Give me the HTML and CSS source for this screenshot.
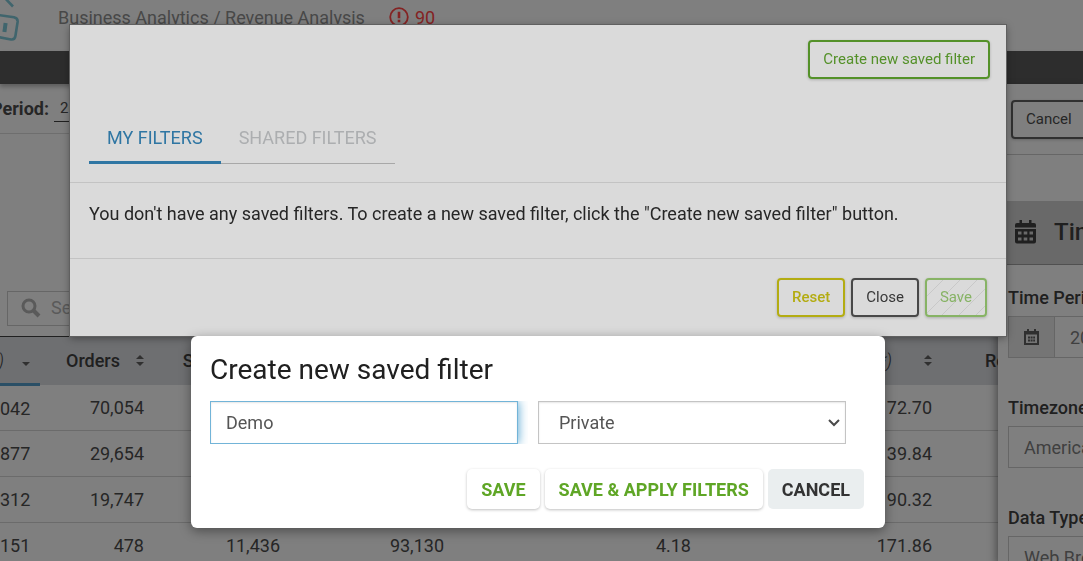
FILE: index.html
```html
<!DOCTYPE html>
<html lang="en">
<head>
  <meta charset="UTF-8">
  <meta name="viewport" content="width=device-width, initial-scale=1.0">
  <title>Revenue Analysis</title>
  <link rel="stylesheet" href="styles.css">
</head>
<body>
  <div class="page">
    <header class="header">
      <svg class="logo" width="20" height="51" viewBox="0 0 20 51" fill="none" stroke="#40656d" stroke-width="2.6">
        <path d="M2 -5 L13 6.5" />
        <path d="M-2 15 L14 17.2 Q18 18 17.6 22 L15.4 36 Q14.8 40 11 39.5 L-2 37" />
        <path d="M5.6 23 L4.4 32" stroke-width="4" />
      </svg>
      <span class="breadcrumb">Business Analytics / Revenue Analysis</span>
      <svg class="alert-icon" width="20" height="20" viewBox="0 0 20 20" fill="none" stroke="#842323">
        <circle cx="10" cy="10" r="8.8" stroke-width="1.8" />
        <path d="M10 4.8 V11.2 M10 12.8 V15.2" stroke-width="2.6" />
      </svg>
      <span class="alert-count">90</span>
    </header>
    <nav class="navbar"></nav>

    <div class="columns">
      <main class="main">
        <div class="period-bar">
          <label class="period-label" for="period">Period:</label>
          <input class="period-input" id="period" type="text" value="2023">
        </div>

        <div class="search-row">
          <div class="search">
            <svg width="20" height="20" viewBox="0 0 20 20" fill="none" stroke="#5a5a5a">
              <circle cx="8" cy="8" r="6" stroke-width="3" />
              <path d="M12.5 12.5 L18 18" stroke-width="4" />
            </svg>
            <input type="text" placeholder="Search" aria-label="Search">
          </div>
        </div>

        <table class="data-table">
          <thead>
            <tr>
              <th class="col-first sorted"><div class="th-inner wide"><i>)</i><span class="sort desc"></span></div></th>
              <th class="col-orders"><div class="th-inner">Orders<span class="sort"></span></div></th>
              <th class="col-sessions"><div class="th-inner">Sessions<span class="sort"></span></div></th>
              <th class="col-views"></th>
              <th class="col-rate"></th>
              <th class="col-value"><div class="th-inner widest"><i>*)</i><span class="sort"></span></div></th>
              <th class="col-revenue">Revenue</th>
            </tr>
          </thead>
          <tbody>
            <tr><td>042</td><td>70,054</td><td></td><td></td><td></td><td>72.70</td><td></td></tr>
            <tr><td>877</td><td>29,654</td><td></td><td></td><td></td><td>39.84</td><td></td></tr>
            <tr><td>312</td><td>19,747</td><td></td><td></td><td></td><td>90.32</td><td></td></tr>
            <tr><td>151</td><td>478</td><td>11,436</td><td>93,130</td><td>4.18</td><td>171.86</td><td></td></tr>
          </tbody>
        </table>
      </main>

      <aside class="sidebar">
        <div class="sidebar-top">
          <button class="btn btn-side">Cancel</button>
        </div>
        <h2 class="sidebar-title">
          <svg width="21" height="24" viewBox="0 0 21 24" fill="#202020">
            <path fill-rule="evenodd" d="M4.5 0h2.5v3h7V0h2.500v3H19q2 0 2 2v2.500H0V5q0-2 2-2h2.500zM0 9h21v12.500q0 2-2 2H2q-2 0-2-2zM3 11.500v3h3.500v-3zM8.700 11.500v3h3.600v-3zM14.500 11.500v3H18v-3zM3 17.500v3h3.500v-3zM8.700 17.500v3h3.600v-3zM14.500 17.500v3H18v-3z" />
          </svg>
          Time
        </h2>
        <div class="field">
          <label for="time-period">Time Period</label>
          <div class="input-group">
            <span class="addon">
              <svg width="15" height="16" viewBox="0 0 15 16" fill="none" stroke="#303030">
                <path d="M1 3 H14 V15 H1 Z" stroke-width="2" />
                <path d="M1 4 H14" stroke-width="3" />
                <path d="M4 0 V3 M11 0 V3" stroke-width="2" />
                <path d="M4 8.500 H11 M4 11.500 H11" stroke-width="2" stroke-dasharray="2 .6" />
              </svg>
            </span>
            <input id="time-period" type="text" value="2023">
          </div>
        </div>
        <div class="field">
          <label for="timezone">Timezone</label>
          <input id="timezone" type="text" value="America/New York">
        </div>
        <div class="field">
          <label for="data-type">Data Type</label>
          <input id="data-type" type="text" value="Web Browser">
        </div>
      </aside>
    </div>
  </div>

  <div class="overlay">
    <div class="filters-modal">
      <div class="filters-head">
        <button class="btn btn-green">Create new saved filter</button>
      </div>
      <div class="tabs">
        <button class="tab active">MY FILTERS</button>
        <button class="tab">SHARED FILTERS</button>
      </div>
      <p class="filters-body">You don't have any saved filters. To create a new saved filter, click the "Create new saved filter" button.</p>
      <div class="filters-foot">
        <button class="btn btn-yellow">Reset</button>
        <button class="btn btn-dark">Close</button>
        <button class="btn btn-disabled" disabled>Save</button>
      </div>
    </div>

    <form class="create-modal">
      <h1>Create new saved filter</h1>
      <div class="create-fields">
        <div class="name-wrap">
          <input class="name-input" type="text" value="Demo" aria-label="Filter name">
        </div>
        <div class="select-wrap">
          <select class="type-select" aria-label="Visibility">
            <option>Private</option>
            <option>Shared</option>
          </select>
          <svg class="chevron" width="12" height="8" viewBox="0 0 12 8" fill="none" stroke="#4a4a4a" stroke-width="2">
            <path d="M1 1 L6 6 L11 1" />
          </svg>
        </div>
      </div>
      <div class="create-actions">
        <button type="button" class="action">SAVE</button>
        <button type="button" class="action">SAVE &amp; APPLY FILTERS</button>
        <button type="button" class="action cancel">CANCEL</button>
      </div>
    </form>
  </div>
</body>
</html>
```
FILE: styles.css
```css
* {
  margin: 0;
  padding: 0;
  box-sizing: border-box;
}

body {
  font-family: Roboto, "Liberation Sans", sans-serif;
  font-size: 18px;
  color: #262626;
  background-color: #7f7f7f;
  height: 100vh;
  overflow: hidden;
}

input, select, button {
  font-family: inherit;
  font-size: inherit;
}

.page {
  display: flex;
  flex-direction: column;
  height: 100vh;
  overflow: hidden;
}

/* top bars */
.header {
  display: flex;
  flex-shrink: 0;
  height: 51px;
  line-height: 36px;
  color: #484848;
}

.breadcrumb {
  margin-left: 38px;
}

.alert-icon {
  margin: 7px 6px 0 24px;
}

.alert-count {
  color: #842323;
}

.navbar {
  position: relative;
  flex-shrink: 0;
  height: 33px;
  background-color: #2d2d2d;
  box-shadow: 0 3px 4px rgba(0, 0, 0, 0.25);
}

.columns {
  display: flex;
  flex: 1;
  min-height: 0;
}

.main {
  flex: 1;
  min-width: 0;
  overflow: hidden;
}

.period-bar {
  display: flex;
  align-items: center;
  height: 50px;
  border-bottom: 1px solid #6e6e6e;
}

.period-label {
  display: flex;
  justify-content: flex-end;
  width: 49px;
  overflow: hidden;
  font-weight: 700;
}

.period-input {
  width: 120px;
  height: 26px;
  margin-left: 5px;
  padding-left: 6px;
  border: none;
  border-bottom: 1px solid #202020;
  background: none;
  font-size: 15px;
  color: #262626;
}

.search-row {
  padding: 157px 7px 10px;
}

.search {
  display: flex;
  align-items: center;
  gap: 10px;
  width: 300px;
  height: 35px;
  padding: 0 0 2px 13px;
  border: 1px solid #666;
}

.search input {
  flex: 1;
  border: none;
  background: none;
}

.search input::placeholder {
  color: #5a5a5a;
}

/* data table */
.data-table {
  width: 110%;
  table-layout: fixed;
  border-collapse: collapse;
  border-top: 1px solid #202020;
}

.data-table th {
  height: 48px;
  padding-right: 10px;
  background-color: #6e6f71;
  font-weight: 500;
  color: #202020;
}

.data-table th i {
  font-weight: 300;
}

.data-table .sorted {
  border-bottom: 3px solid #2a4f66;
}

.data-table td {
  height: 46px;
  padding-right: 10px;
  border-bottom: 1px solid #6b6b6b;
  text-align: right;
}

.col-first { width: 40px; }
.col-orders { width: 114px; }
.col-sessions { width: 136px; }
.col-views { width: 164px; }
.col-rate { width: 247px; }
.col-value { width: 241px; }

.data-table .col-revenue {
  padding-left: 43px;
  text-align: left;
}

.th-inner {
  display: flex;
  align-items: center;
  justify-content: flex-end;
  gap: 16px;
}

.th-inner.wide {
  gap: 18px;
}

.th-inner.widest {
  gap: 32px;
}

.sort {
  display: flex;
  flex-direction: column;
  gap: 3px;
}

.sort::before, .sort::after {
  content: '';
  border: 4px solid transparent;
}

.sort::before {
  border-top: none;
  border-bottom-color: #303030;
}

.sort::after {
  border-bottom: none;
  border-top-color: #303030;
}

.sort.desc::before {
  border-bottom-color: transparent;
}

/* side panel, wider than its visible part */
.sidebar {
  position: relative;
  flex: 0 0 85px;
  overflow: hidden;
  white-space: nowrap;
  background-color: #7f7f7f;
  box-shadow: -2px 4px 8px rgba(0, 0, 0, 0.4);
}

.sidebar-top {
  height: 71px;
  padding: 16px 13px;
  border-bottom: 1px solid #666;
}

.sidebar-title {
  display: flex;
  align-items: center;
  gap: 18px;
  height: 64px;
  margin-top: 46px;
  padding: 0 0 2px 17px;
  border-bottom: 1px solid #505050;
  background-color: #696969;
  font-size: 24px;
  font-weight: 500;
  color: #202020;
}

.sidebar-title svg {
  flex-shrink: 0;
}

.field {
  padding: 22px 0 29px 10px;
}

.field + .field {
  padding-top: 10px;
}

.field label {
  display: block;
  height: 29px;
  line-height: 22px;
  font-weight: 500;
  color: #202020;
}

.field input {
  width: 280px;
  height: 42px;
  padding-left: 15px;
  border: 1px solid #666;
  background: none;
  color: #404040;
}

.input-group {
  display: flex;
}

.addon {
  display: flex;
  flex: 0 0 46px;
  align-items: center;
  justify-content: center;
  border: 1px solid #666;
  border-right: none;
  background-color: #757575;
}

/* dialogs */
.btn {
  height: 39px;
  padding: 0 13px 2px;
  border: 2px solid;
  border-radius: 4px;
  background-color: transparent;
  box-shadow: 0 1px 3px rgba(0, 0, 0, 0.2);
  font-size: 15px;
  cursor: pointer;
}

.btn-side {
  border-color: #303030;
  color: #262626;
}

.btn-green {
  border-color: #549129;
  color: #549129;
}

.btn-yellow {
  border-color: #b3ac12;
  color: #b3ac12;
  font-weight: 500;
}

.btn-dark {
  border-color: #484848;
  color: #383838;
}

.btn-disabled {
  border-color: #87b365;
  color: #87b365;
  background-image: repeating-linear-gradient(135deg, transparent 0 11px, #c8c8c8 11px 12px);
  cursor: default;
}

.overlay {
  position: fixed;
  inset: 0;
  padding: 25px 77px 0 70px;
}

.filters-modal {
  background-color: #dadada;
  box-shadow: 0 0 0 1px #606060, 0 2px 8px rgba(0, 0, 0, 0.4);
}

.filters-head {
  display: flex;
  justify-content: flex-end;
  padding: 15px 16px 33px;
}

.tabs {
  display: flex;
  padding: 0 19px 18px;
}

.tab {
  height: 52px;
  padding: 0 18px;
  border: none;
  border-bottom: 1px solid #a8a8a8;
  background: none;
  color: #acaeb0;
  cursor: pointer;
}

.tab.active {
  padding-top: 2px;
  border-bottom: 3px solid #2f76a3;
  color: #2f76a3;
}

.filters-body {
  padding: 20px 19px 33px;
  border-top: 1px solid #c3c3c3;
  border-bottom: 1px solid #c3c3c3;
  line-height: 22px;
}

.filters-foot {
  display: flex;
  justify-content: flex-end;
  gap: 6px;
  padding: 19px;
}

.create-modal {
  position: relative;
  width: 694px;
  max-width: 100%;
  margin: 0 auto;
  padding: 18px 19px 19px;
  border-radius: 6px;
  background-color: #fff;
  box-shadow: 0 3px 12px rgba(0, 0, 0, 0.4);
}

.create-modal h1 {
  margin-bottom: 15px;
  line-height: 32px;
  font-size: 28px;
  font-weight: 400;
  color: #202020;
}

.create-fields {
  display: flex;
  padding-right: 20px;
  margin-bottom: 25px;
}

/* the focus glow is cut off above and below the box */
.name-wrap {
  flex: 1;
  margin-right: 10px;
  padding-right: 10px;
  overflow: hidden;
}

.select-wrap {
  position: relative;
  flex: 1;
  margin-right: -20px;
  padding-right: 20px;
}

.name-input, .type-select {
  display: block;
  width: 100%;
  height: 43px;
  border: 1px solid #c4c4c4;
  border-radius: 0;
  outline: none;
  background-color: #fff;
  box-shadow: inset 0 1px 2px rgba(0, 0, 0, 0.1);
  color: #555;
}

.name-input {
  padding: 0 15px;
  border-color: #72b4d8;
  box-shadow: inset 0 1px 2px rgba(0, 0, 0, 0.1), 0 0 10px #4a9fce;
}

.type-select {
  padding: 0 20px;
  appearance: none;
}

.chevron {
  position: absolute;
  top: 18px;
  right: 26px;
  pointer-events: none;
}

.create-actions {
  display: flex;
  justify-content: flex-end;
  gap: 5px;
  padding-right: 2px;
}

.action {
  height: 40px;
  padding: 0 14px;
  border: none;
  border-radius: 5px;
  background-color: #fff;
  box-shadow: 0 1px 3px rgba(0, 0, 0, 0.25);
  font-weight: 700;
  color: #5fa626;
  cursor: pointer;
}

.action.cancel {
  background-color: #eaeeef;
  box-shadow: none;
  color: #333;
}
```
